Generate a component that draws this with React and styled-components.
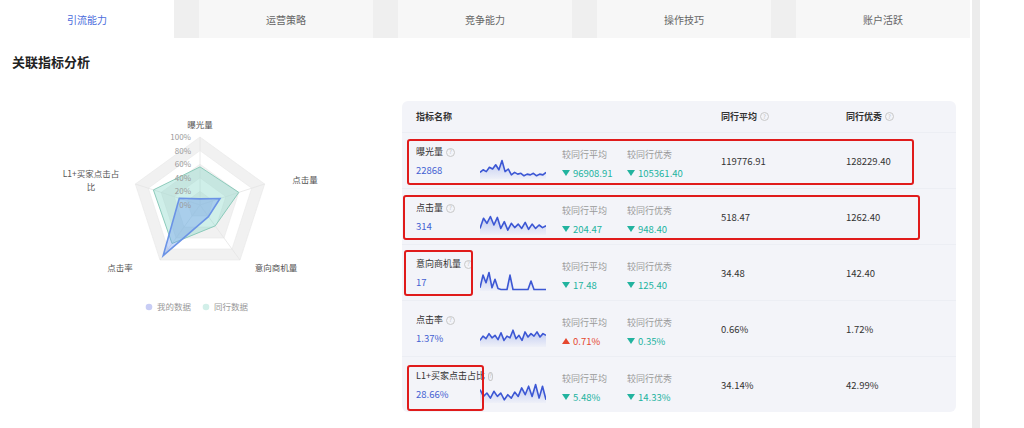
import React from "react";
import styled, { createGlobalStyle } from "styled-components";

const GlobalStyle = createGlobalStyle`
  html, body {
    margin: 0;
    padding: 0;
    background: #fff;
    font-family: "Noto Sans CJK SC", "Noto Sans", sans-serif;
  }
`;

const tabs = ["引流能力", "运营策略", "竞争能力", "操作技巧", "账户活跃"];

const rows = [
  {
    name: "曝光量",
    value: "22868",
    avgDiff: "96908.91",
    topDiff: "105361.40",
    avg: "119776.91",
    top: "128229.40",
    spark: [0.3, 0.45, 0.35, 0.6, 0.5, 0.75, 0.45, 1, 0.35, 0.5, 0.15, 0.3, 0.2, 0.25, 0.1, 0.2, 0.15, 0.25, 0.1, 0.2, 0.15, 0.3],
  },
  {
    name: "点击量",
    value: "314",
    avgDiff: "204.47",
    topDiff: "948.40",
    avg: "518.47",
    top: "1262.40",
    spark: [0.3, 0.9, 0.6, 1, 0.5, 0.95, 0.3, 0.7, 0.2, 0.6, 0.35, 0.55, 0.3, 0.65, 0.25, 0.55, 0.3, 0.5, 0.35, 0.45],
  },
  {
    name: "意向商机量",
    value: "17",
    avgDiff: "17.48",
    topDiff: "125.40",
    avg: "34.48",
    top: "142.40",
    spark: [0.1, 0.85, 0.4, 1, 0.1, 0.6, 0.05, 0, 0, 0, 0.85, 0, 0, 0, 0, 0, 0, 0.5, 0, 0, 0, 0, 0],
  },
  {
    name: "点击率",
    value: "1.37%",
    avgDiff: "0.71%",
    avgUp: true,
    topDiff: "0.35%",
    avg: "0.66%",
    top: "1.72%",
    spark: [0.3, 0.55, 0.4, 0.7, 0.45, 0.6, 0.35, 0.75, 0.3, 0.55, 0.45, 0.9, 0.4, 0.6, 0.3, 0.8, 0.5, 0.7, 0.55, 0.8, 0.5, 0.7, 0.6],
  },
  {
    name: "L1+买家点击占比",
    value: "28.66%",
    avgDiff: "5.48%",
    topDiff: "14.33%",
    avg: "34.14%",
    top: "42.99%",
    spark: [0.7, 0.3, 0.5, 0.2, 0.6, 0.3, 0.5, 0.1, 0.4, 0.2, 0.55, 0.3, 0.8, 0.4, 0.9, 0.3, 1, 0.2, 0.9, 0.1],
  },
];

// red annotation frames over the table
const marks = [
  { left: 5, top: 38, width: 507, height: 46 },
  { left: 1, top: 94, width: 517, height: 45 },
  { left: 2, top: 149, width: 69, height: 46 },
  { left: 5, top: 264, width: 77, height: 46 },
];

const CX = 200;
const CY = 104;
const R = 68;
const axes = ["曝光量", "点击量", "意向商机量", "点击率", "L1+买家点击占比"];
const mine = [0.09, 0.31, 0.21, 0.92, 0.32];
const peers = [0.56, 0.6, 0.38, 0.7, 0.72];

const pt = (i, v) => {
  const a = ((-90 + 72 * i) * Math.PI) / 180;
  return [CX + R * v * Math.cos(a), CY + R * v * Math.sin(a)];
};
const poly = (vals) => vals.map((v, i) => pt(i, v).map((n) => n.toFixed(1)).join(",")).join(" ");

export default function App() {
  return (
    <>
      <GlobalStyle />
      <S.Page>
        <S.Main>
          <Tab.Bar>
            {tabs.map((t, i) => (
              <Tab.Item key={t} $active={i === 0}>
                {t}
              </Tab.Item>
            ))}
          </Tab.Bar>
          <S.Title>关联指标分析</S.Title>
          <S.Body>
            <Radar />
            <Table.Panel>
              <Table.Head>
                <Table.HeadCell $span={4}>指标名称</Table.HeadCell>
                <Table.HeadCell>
                  同行平均
                  <Help />
                </Table.HeadCell>
                <Table.HeadCell>
                  同行优秀
                  <Help />
                </Table.HeadCell>
              </Table.Head>
              {rows.map((r, i) => (
                <Table.Row key={r.name}>
                  <Table.Name>
                    <Table.Label>
                      {r.name}
                      <Help />
                    </Table.Label>
                    <Table.Value>{r.value}</Table.Value>
                  </Table.Name>
                  <Table.Spark>
                    <Sparkline data={r.spark} id={`sp${i}`} />
                  </Table.Spark>
                  <Table.Compare>
                    <Table.Caption>较同行平均</Table.Caption>
                    <Table.Diff $up={r.avgUp}>
                      <Arrow $up={r.avgUp} />
                      {r.avgDiff}
                    </Table.Diff>
                  </Table.Compare>
                  <Table.Compare>
                    <Table.Caption>较同行优秀</Table.Caption>
                    <Table.Diff>
                      <Arrow />
                      {r.topDiff}
                    </Table.Diff>
                  </Table.Compare>
                  <Table.Num>{r.avg}</Table.Num>
                  <Table.Num>{r.top}</Table.Num>
                </Table.Row>
              ))}
              {marks.map((m, i) => (
                <Table.Mark key={i} $box={m} />
              ))}
            </Table.Panel>
          </S.Body>
        </S.Main>
        <S.Scroll />
      </S.Page>
    </>
  );
}

function Radar() {
  const rings = [1, 0.8, 0.6, 0.4, 0.2];
  return (
    <S.Chart width="402" height="313" viewBox="0 0 402 313">
      {rings.map((k, i) => (
        <polygon
          key={k}
          points={poly([k, k, k, k, k])}
          fill={i % 2 === 0 ? "#f1f1f1" : "#ffffff"}
          stroke="#e8e8e8"
          strokeWidth="0.6"
        />
      ))}
      {axes.map((a, i) => {
        const [x, y] = pt(i, 1);
        return <line key={a} x1={CX} y1={CY} x2={x} y2={y} stroke="#e4e4e4" strokeWidth="0.8" />;
      })}
      <polygon points={poly(peers)} fill="rgba(130,212,196,0.38)" stroke="#8ccbbb" strokeWidth="1" />
      <polygon points={poly(mine)} fill="rgba(96,146,240,0.35)" stroke="#6b93e6" strokeWidth="1.6" />
      <g fill="#9a9a9a" fontSize="8" textAnchor="end">
        {["0%", "20%", "40%", "60%", "80%", "100%"].map((t, i) => (
          <text key={t} x="191" y={CY - 13.6 * i + 3}>
            {t}
          </text>
        ))}
      </g>
      <g fill="#555" fontSize="8.5" textAnchor="middle">
        <text x="200" y="27">曝光量</text>
        <text x="305" y="82">点击量</text>
        <text x="276" y="170">意向商机量</text>
        <text x="120" y="170">点击率</text>
        <text x="91" y="76">L1+买家点击占</text>
        <text x="91" y="89">比</text>
      </g>
      <circle cx="149" cy="206" r="3.3" fill="#c8cdf5" />
      <text x="157" y="209" fill="#999" fontSize="8.5">我的数据</text>
      <circle cx="206" cy="206" r="3.3" fill="#d2efe9" />
      <text x="214" y="209" fill="#999" fontSize="8.5">同行数据</text>
    </S.Chart>
  );
}

function Sparkline({ data, id }) {
  const w = 66;
  const h = 20;
  const step = w / (data.length - 1);
  const line = data
    .map((v, i) => `${i ? "L" : "M"}${(i * step).toFixed(1)},${(h - 1.5 - v * (h - 3)).toFixed(1)}`)
    .join(" ");
  return (
    <svg width={w} height={h} viewBox={`0 0 ${w} ${h}`}>
      <defs>
        <linearGradient id={id} x1="0" y1="0" x2="0" y2="1">
          <stop offset="0" stopColor="#5b78e0" stopOpacity="0.35" />
          <stop offset="1" stopColor="#5b78e0" stopOpacity="0.03" />
        </linearGradient>
      </defs>
      <path d={`${line} L${w},${h} L0,${h} Z`} fill={`url(#${id})`} />
      <path d={line} fill="none" stroke="#3c57d4" strokeWidth="1.6" strokeLinejoin="round" />
    </svg>
  );
}

const Help = () => <S.Help>?</S.Help>;

const Arrow = styled.span`
  display: inline-block;
  width: 0;
  height: 0;
  margin-right: 3px;
  border-left: 4px solid transparent;
  border-right: 4px solid transparent;
  ${(p) => (p.$up ? "border-bottom: 6px solid #e5472f;" : "border-top: 6px solid #22b39f;")}
  vertical-align: 1px;
`;

const S = {
  Page: styled.div`
    display: flex;
    width: 1024px;
    height: 428px;
    overflow: hidden;
  `,
  Main: styled.div`
    width: 970px;
    margin-right: 2px;
    display: flex;
    flex-direction: column;
  `,
  Scroll: styled.div`
    width: 8px;
    height: 428px;
    background: #ececec;
  `,
  Title: styled.div`
    height: 63px;
    box-sizing: border-box;
    padding: 15px 0 0 12px;
    font-size: 13px;
    line-height: 18px;
    font-weight: 700;
    color: #222;
  `,
  Body: styled.div`
    display: flex;
    align-items: flex-start;
  `,
  Chart: styled.svg`
    display: block;
    flex: 0 0 402px;
    font-family: "Noto Sans CJK SC", "Noto Sans", sans-serif;
  `,
  Help: styled.span`
    display: inline-flex;
    align-items: center;
    justify-content: center;
    width: 7px;
    height: 7px;
    margin-left: 3px;
    border: 1px solid #c8c8c8;
    border-radius: 50%;
    color: #c0c0c0;
    font-size: 6px;
    line-height: 1;
    font-weight: 400;
  `,
};

const Tab = {
  Bar: styled.div`
    display: flex;
    gap: 25px;
    height: 38px;
    background: #efefef;
  `,
  Item: styled.div`
    flex: 1;
    display: flex;
    align-items: center;
    justify-content: center;
    font-size: 10px;
    background: ${(p) => (p.$active ? "#fff" : "#f7f7f7")};
    color: ${(p) => (p.$active ? "#4b6cdc" : "#666")};
  `,
};

const cols = "64px 82px 65px 94px 125px 1fr";

const Table = {
  Panel: styled.div`
    position: relative;
    width: 554px;
    height: 311px;
    background: #f3f4f9;
    border-radius: 6px;
  `,
  Head: styled.div`
    display: grid;
    grid-template-columns: ${cols};
    align-items: center;
    height: 31px;
    padding-left: 14px;
  `,
  HeadCell: styled.div`
    grid-column: span ${(p) => p.$span || 1};
    font-size: 9px;
    font-weight: 700;
    color: #333;
    display: flex;
    align-items: center;
  `,
  Row: styled.div`
    display: grid;
    grid-template-columns: ${cols};
    height: 56px;
    box-sizing: border-box;
    padding-left: 14px;
    border-top: 1px solid #eceef4;
  `,
  Name: styled.div`
    padding-top: 12px;
    white-space: nowrap;
  `,
  Label: styled.div`
    display: flex;
    align-items: center;
    font-size: 9px;
    line-height: 14px;
    color: #333;
  `,
  Value: styled.div`
    margin-top: 3px;
    font-size: 9.5px;
    line-height: 16px;
    color: #4461d2;
  `,
  Spark: styled.div`
    padding-top: 26px;
    line-height: 0;
  `,
  Compare: styled.div`
    padding-top: 15px;
    white-space: nowrap;
  `,
  Caption: styled.div`
    font-size: 9px;
    line-height: 14px;
    color: #9a9a9a;
  `,
  Diff: styled.div`
    margin-top: 3px;
    font-size: 9.5px;
    line-height: 16px;
    color: ${(p) => (p.$up ? "#e5472f" : "#22b39f")};
  `,
  Num: styled.div`
    align-self: center;
    font-size: 9.5px;
    color: #333;
  `,
  Mark: styled.div`
    position: absolute;
    left: ${(p) => p.$box.left}px;
    top: ${(p) => p.$box.top}px;
    width: ${(p) => p.$box.width}px;
    height: ${(p) => p.$box.height}px;
    box-sizing: border-box;
    border: 2.5px solid #e01b1b;
    border-radius: 3px;
    pointer-events: none;
  `,
};
